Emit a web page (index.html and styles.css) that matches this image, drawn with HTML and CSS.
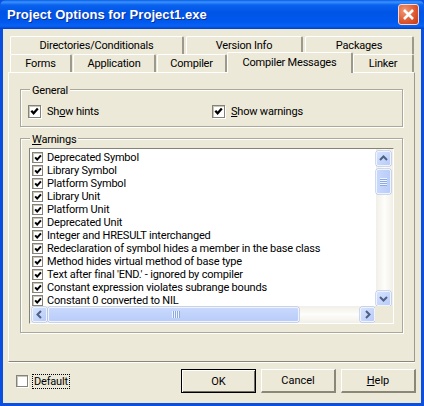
FILE: index.html
```html
<!DOCTYPE html>
<html lang="en">
<head>
  <meta charset="UTF-8">
  <meta name="viewport" content="width=device-width, initial-scale=1.0">
  <title>Project Options for Project1.exe</title>
  <link rel="stylesheet" href="styles.css">
</head>
<body>
  <svg class="defs" width="0" height="0">
    <symbol id="tick" viewBox="0 0 9 9">
      <path d="M1.300 3.800L3.600 6.300 7.800 1.600" fill="none" stroke="#000" stroke-width="2.300"/>
    </symbol>
  </svg>

  <div class="window">
    <!-- Title bar -->
    <header class="titlebar">
      <h1>Project Options for Project1.exe</h1>
      <button class="close" aria-label="Close">
        <svg width="13" height="13" viewBox="0 0 13 13"><path d="M2 2l9 9M11 2l-9 9" stroke="#fff" stroke-width="2.600"/></svg>
      </button>
    </header>

    <div class="client">
      <!-- Tabs -->
      <nav class="tabs">
        <div class="tab-row tab-row-back">
          <a class="tab tab-dirs">Directories/Conditionals</a>
          <a class="tab tab-version">Version Info</a>
          <a class="tab tab-packages">Packages</a>
        </div>
        <div class="tab-row">
          <a class="tab tab-forms">Forms</a>
          <a class="tab tab-app">Application</a>
          <a class="tab tab-compiler">Compiler</a>
          <a class="tab tab-messages active">Compiler Messages</a>
          <a class="tab tab-linker">Linker</a>
        </div>
      </nav>

      <!-- Main Content -->
      <main class="page">
        <section class="group group-general">
          <span class="group-title">General</span>
          <label class="option option-hints"><span class="check"><svg><use href="#tick"/></svg></span>Sh<u>o</u>w hints</label>
          <label class="option"><span class="check"><svg><use href="#tick"/></svg></span><u>S</u>how warnings</label>
        </section>

        <section class="group group-warnings">
          <span class="group-title"><u>W</u>arnings</span>
          <div class="listbox">
            <div class="list-top">
              <ul class="rows">
                <li><span class="check small"><svg><use href="#tick"/></svg></span>Deprecated Symbol</li>
                <li><span class="check small"><svg><use href="#tick"/></svg></span>Library Symbol</li>
                <li><span class="check small"><svg><use href="#tick"/></svg></span>Platform Symbol</li>
                <li><span class="check small"><svg><use href="#tick"/></svg></span>Library Unit</li>
                <li><span class="check small"><svg><use href="#tick"/></svg></span>Platform Unit</li>
                <li><span class="check small"><svg><use href="#tick"/></svg></span>Deprecated Unit</li>
                <li><span class="check small"><svg><use href="#tick"/></svg></span>Integer and HRESULT interchanged</li>
                <li><span class="check small"><svg><use href="#tick"/></svg></span>Redeclaration of symbol hides a member in the base class</li>
                <li><span class="check small"><svg><use href="#tick"/></svg></span>Method hides virtual method of base type</li>
                <li><span class="check small"><svg><use href="#tick"/></svg></span>Text after final 'END.' - ignored by compiler</li>
                <li><span class="check small"><svg><use href="#tick"/></svg></span>Constant expression violates subrange bounds</li>
                <li><span class="check small"><svg><use href="#tick"/></svg></span>Constant 0 converted to NIL</li>
              </ul>
              <div class="vscroll">
                <span class="sb-btn"><svg width="9" height="7" viewBox="0 0 9 7"><path d="M1 5l3.500-3.500L8 5" fill="none" stroke="#4d6185" stroke-width="2"/></svg></span>
                <span class="sb-thumb sb-thumb-v"><i class="grip-v"></i></span>
                <span class="sb-btn sb-btn-end"><svg width="9" height="7" viewBox="0 0 9 7"><path d="M1 2l3.500 3.500L8 2" fill="none" stroke="#4d6185" stroke-width="2"/></svg></span>
              </div>
            </div>
            <div class="list-bottom">
              <div class="hscroll">
                <span class="sb-btn"><svg width="7" height="9" viewBox="0 0 7 9"><path d="M5 1L1.500 4.500 5 8" fill="none" stroke="#4d6185" stroke-width="2"/></svg></span>
                <span class="sb-thumb sb-thumb-h"><i class="grip-h"></i></span>
                <span class="sb-btn sb-btn-end"><svg width="7" height="9" viewBox="0 0 7 9"><path d="M2 1l3.500 3.500L2 8" fill="none" stroke="#4d6185" stroke-width="2"/></svg></span>
              </div>
              <div class="corner"></div>
            </div>
          </div>
        </section>
      </main>

      <!-- Footer -->
      <footer class="footer">
        <label class="option-default"><span class="check flat"></span><span class="focus">Default</span></label>
        <div class="buttons">
          <button class="button default-button">OK</button>
          <button class="button">Cancel</button>
          <button class="button"><u>H</u>elp</button>
        </div>
      </footer>
    </div>
  </div>
</body>
</html>
```

FILE: styles.css
```css
* {
  box-sizing: border-box;
}
html, body {
  margin: 0;
  padding: 0;
}
body {
  width: 424px;
  height: 406px;
  overflow: hidden;
  font-family: Roboto, Arial, sans-serif;
  font-size: 11px;
  letter-spacing: -0.2px;
  color: #000;
  background-color: #ece9d8;
}
.defs {
  position: absolute;
}
.window {
  display: flex;
  flex-direction: column;
  width: 424px;
  height: 406px;
  background-color: #0a4fe0;
  padding: 0 3px 3px;
}
.titlebar {
  display: flex;
  justify-content: space-between;
  align-items: center;
  height: 29px;
  margin: 0 -3px;
  padding: 0 5px 1px 7px;
  border-radius: 6px 6px 0 0;
  background: linear-gradient(#0a5ae4 0, #3a93ff 2px, #0a62ee 5px, #0055e6 12px, #0058ee 22px, #0a62f5 26px, #0040c8 29px);
}
.titlebar h1 {
  margin: 0;
  font-family: "Liberation Sans", Arial, sans-serif;
  font-size: 13px;
  font-weight: bold;
  letter-spacing: 0.06px;
  color: white;
  text-shadow: 1px 1px 0 #0a2f9c;
  white-space: nowrap;
}
.close {
  display: flex;
  justify-content: center;
  align-items: center;
  width: 21px;
  height: 21px;
  padding: 0;
  border: 1px solid #f2dcd6;
  border-radius: 3px;
  background: radial-gradient(circle at 30% 30%, #f09a78, #dd5a32 55%, #c33a16);
}
.client {
  flex: 1;
  display: flex;
  flex-direction: column;
  background-color: #ece9d8;
  padding: 7px 5px 0;
}
.tabs {
  padding-left: 2px;
}
.tab-row {
  display: flex;
  height: 18px;
}
.tab-row-back .tab {
  margin-right: 2px;
}
.tab {
  display: flex;
  justify-content: center;
  align-items: center;
  margin-right: 1px;
  border-top: 1px solid #fff;
  border-left: 1px solid #fff;
  border-right: 2px solid #9d9a8b;
  border-radius: 2px 2px 0 0;
  white-space: nowrap;
}
.tab-dirs { width: 174px; }
.tab-version { width: 117px; }
.tab-packages { width: 109px; margin-right: 0 !important; }
.tab-forms { width: 62px; }
.tab-app { width: 83px; }
.tab-compiler { width: 70px; margin-right: 0; }
.tab-messages { width: 126px; margin-right: 0; }
.tab-linker { width: 61px; margin-right: 0; }
.tab.active {
  position: relative;
  z-index: 1;
  height: 21px;
  margin-top: -2px;
  padding-bottom: 2px;
  background-color: #ece9d8;
}
.page {
  width: 407px;
  height: 290px;
  padding: 16px 11px 0;
  border-top: 1px solid #fff;
  border-left: 1px solid #fff;
  border-right: 1px solid #9d9a8b;
  border-bottom: 1px solid #8a8778;
  box-shadow: 0 1px 0 #fff;
}
.group {
  position: relative;
  width: 383px;
  border: 1px solid #aca899;
  box-shadow: 1px 1px 0 #fff, inset 1px 1px 0 #fff;
}
.group-title {
  position: absolute;
  top: -6px;
  left: 9px;
  padding: 0 2px;
  background-color: #ece9d8;
}
.group-general {
  display: flex;
  align-items: center;
  height: 38px;
  padding: 6px 0 0 7px;
  margin-bottom: 11px;
}
.option {
  display: flex;
  align-items: center;
}
.option-hints {
  width: 184px;
}
.group-warnings {
  height: 195px;
  padding: 9px 9px 0 8px;
}
.check {
  display: inline-flex;
  justify-content: center;
  align-items: center;
  flex: none;
  width: 13px;
  height: 13px;
  margin-right: 6px;
  border: 1px solid #85827a;
  box-shadow: inset 1px 1px 0 #c9c6b7, 1px 1px 0 #fff;
  background-color: #fff;
}
.check svg {
  width: 9px;
  height: 9px;
}
.check.small {
  width: 11px;
  height: 11px;
  margin-right: 4px;
}
.check.small svg {
  width: 8px;
  height: 8px;
}
.check.flat {
  width: 12px;
  height: 12px;
  margin-right: 5px;
}
.listbox {
  display: flex;
  flex-direction: column;
  width: 365px;
  height: 176px;
  border-top: 1px solid #85827a;
  border-left: 1px solid #85827a;
  border-right: 1px solid #fff;
  border-bottom: 1px solid #fff;
  background-color: #fff;
}
.list-top {
  flex: 1;
  display: flex;
  min-height: 0;
}
.rows {
  flex: 1;
  margin: 0;
  padding: 2px 0 0 2px;
  list-style: none;
  overflow: hidden;
}
.rows li {
  display: flex;
  align-items: center;
  height: 13px;
  white-space: nowrap;
}
.vscroll {
  display: flex;
  flex-direction: column;
  width: 17px;
  padding: 2px 1px 0 0;
  background: linear-gradient(to right, #f1efe6, #fdfdfb 50%, #f1efe6);
}
.sb-btn {
  display: flex;
  justify-content: center;
  align-items: center;
  flex: none;
  width: 15px;
  height: 15px;
  border: 1px solid #eef3fe;
  border-radius: 2px;
  background: linear-gradient(135deg, #d7e3fd, #b8cbf8);
  box-shadow: 0 0 0 0.500px #9fb5e6;
}
.sb-btn-end {
  margin-top: auto;
}
.sb-thumb {
  display: flex;
  justify-content: center;
  align-items: center;
  border: 1px solid #eef3fe;
  border-radius: 2px;
  background: linear-gradient(to right, #c9d8fc, #b9cdf9);
  box-shadow: 0 0 0 0.500px #9fb5e6;
}
.sb-thumb-v {
  width: 15px;
  height: 25px;
  margin-top: 3px;
}
.grip-v {
  width: 7px;
  height: 8px;
  background: repeating-linear-gradient(#eef4fe 0 1px, #8ea8e6 1px 2px);
}
.list-bottom {
  display: flex;
  height: 17px;
}
.hscroll {
  flex: 1;
  display: flex;
  padding: 1px 0 0 2px;
  background: linear-gradient(#f1efe6, #fdfdfb 50%, #f1efe6);
}
.hscroll .sb-btn-end {
  margin-top: 0;
  margin-left: auto;
}
.sb-thumb-h {
  width: 251px;
  height: 15px;
  margin-left: 1px;
  justify-content: flex-end;
  padding-right: 118px;
  background: linear-gradient(#c9d8fc, #b9cdf9);
}
.grip-h {
  width: 8px;
  height: 7px;
  background: repeating-linear-gradient(to right, #eef4fe 0 1px, #8ea8e6 1px 2px);
}
.corner {
  width: 18px;
  background-color: #ece9d8;
}
.footer {
  flex: 1;
  display: flex;
  justify-content: space-between;
  padding: 7px 0 0 8px;
}
.option-default {
  display: flex;
  align-items: center;
  height: 24px;
}
.focus {
  padding: 0 1px;
  outline: 1px dotted #000;
  outline-offset: 0;
}
.buttons {
  display: flex;
  gap: 5px;
}
.button {
  width: 75px;
  height: 24px;
  padding: 0;
  font: inherit;
  color: #000;
  background-color: #ece9d8;
  border-top: 1px solid #fff;
  border-left: 1px solid #fff;
  border-right: 2px solid #8a8778;
  border-bottom: 2px solid #8a8778;
}
.default-button {
  border: 1px solid #000;
  box-shadow: inset 1px 1px 0 #fff, inset -1px -1px 0 #716f64;
}
```
